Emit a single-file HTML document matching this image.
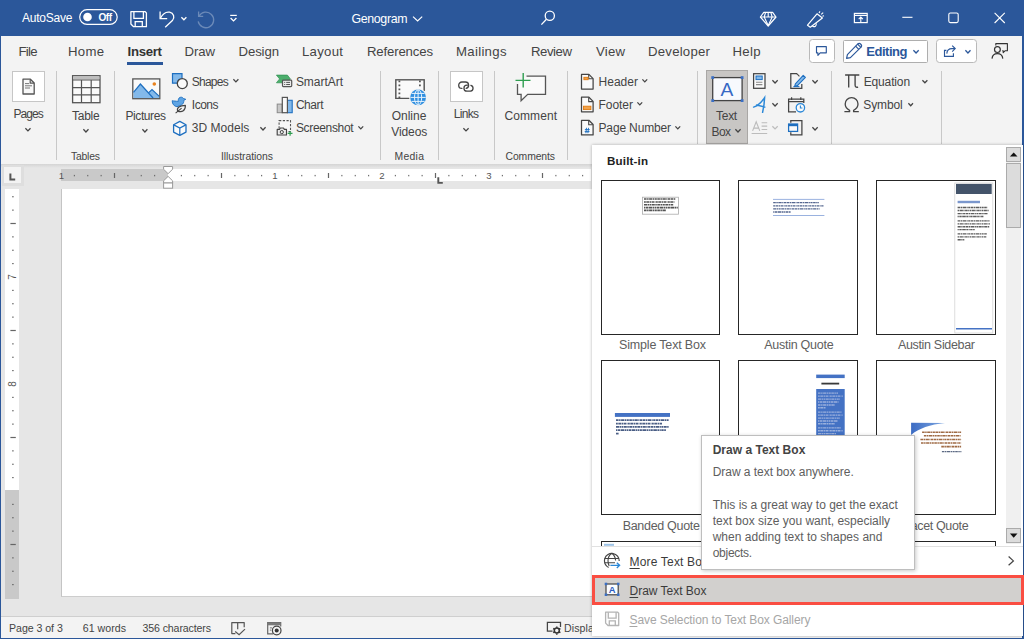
<!DOCTYPE html>
<html lang="en"><head><meta charset="utf-8"><title>Genogram - Word</title>
<style>
html,body{margin:0;padding:0}
body{width:1024px;height:639px;position:relative;overflow:hidden;background:#e6e6e6;font-family:"Liberation Sans",sans-serif}
.t{position:absolute;white-space:pre;line-height:1}
.i{position:absolute;overflow:visible}
.b{position:absolute;box-sizing:border-box}
u{text-decoration:underline;text-underline-offset:1.5px;text-decoration-thickness:1px}
#app{position:absolute;left:0;top:0;width:1024px;height:639px;overflow:hidden;background:#e6e6e6}
#title{position:absolute;left:0;top:0;width:1024px;height:35.5px;background:#2b579a}
#tabs{position:absolute;left:0;top:35.5px;width:1024px;height:31.5px;background:#f3f3f3}
#ribbon{position:absolute;left:0;top:67px;width:1024px;height:96.6px;background:#f3f3f3}
#rshadow{position:absolute;left:0;top:163.6px;width:1024px;height:4.4px;background:linear-gradient(#d4d4d4,#e6e6e6)}
#doc{position:absolute;left:0;top:163px;width:1024px;height:453px}
#status{position:absolute;left:0;top:616px;width:1024px;height:22px;background:#f3f3f3;border-top:1px solid #cfcfcf;box-sizing:border-box}
#bl{position:absolute;left:0;top:35px;width:1.4px;height:604px;background:#2b579a}
#br{position:absolute;left:1022px;top:35px;width:2px;height:604px;background:#2b579a}
#bb{position:absolute;left:0;top:637.5px;width:1024px;height:1.5px;background:#2b579a}
.sep{position:absolute;width:1px;background:#c8c8c8;top:71px;height:89px}
.tabsel{position:absolute;left:127px;top:62px;width:36px;height:3.4px;background:#2b579a}
.bigbtn{position:absolute;box-sizing:border-box;background:#fff;border:1px solid #c6c6c6}
#panel{position:absolute;left:592px;top:144.6px;width:431px;height:491.4px;background:#fff;box-shadow:0 0 3px rgba(0,0,0,.3)}
#tip{position:absolute;left:701.2px;top:435px;width:213.4px;height:135.2px;background:#fff;border:1px solid #bebebe;box-sizing:border-box;box-shadow:1px 1px 4px rgba(0,0,0,.22)}
.thumb{position:absolute;box-sizing:border-box;border:1.25px solid #262626;background:#fff;width:119.9px;height:154.6px;overflow:hidden}
</style></head>
<body>
<div id="app">
<div id="title"></div><div id="tabs"></div><div id="ribbon"></div>
<div id="rshadow"></div>
<div id="doc"><div style="position:absolute;left:0;top:-163px"><div class="b" style="left:2px;top:165px;width:21.6px;height:21px;background:#dedede"></div><div class="b" style="left:4px;top:167px;width:16.6px;height:16.4px;background:#f3f3f3"></div><svg class="i" style="left:8px;top:172px" width="9" height="10" viewBox="8 172 9 10"><path d="M10.4 173.6V179.4H15.2" fill="none" stroke="#555" stroke-width="2"/></svg><div class="b" style="left:61px;top:169px;width:107px;height:12.3px;background:#c9c9c9"></div><div class="b" style="left:168px;top:169px;width:423px;height:12.3px;background:#fff"></div><div class="b" style="left:61px;top:188.6px;width:531px;height:408.8px;background:#fff;border-left:1.5px solid #c4c4c4;border-bottom:1px solid #cdcdcd"></div><div class="b" style="left:5px;top:189px;width:13.6px;height:301px;background:#fff"></div><div class="b" style="left:5px;top:490px;width:13.6px;height:109px;background:#c9c9c9"></div><svg class="i" style="left:0px;top:163px" width="600" height="440" viewBox="0 163 600 440"><rect x="73.83" y="174.9" width="1.1" height="1.4" fill="#666"/><rect x="87.2" y="174.9" width="1.1" height="1.4" fill="#666"/><rect x="100.58" y="174.9" width="1.1" height="1.4" fill="#666"/><rect x="113.9" y="173" width="1.2" height="5" fill="#666"/><rect x="127.33" y="174.9" width="1.1" height="1.4" fill="#666"/><rect x="140.7" y="174.9" width="1.1" height="1.4" fill="#666"/><rect x="154.07" y="174.9" width="1.1" height="1.4" fill="#666"/><rect x="180.82" y="174.9" width="1.1" height="1.4" fill="#666"/><rect x="194.2" y="174.9" width="1.1" height="1.4" fill="#666"/><rect x="207.57" y="174.9" width="1.1" height="1.4" fill="#666"/><rect x="220.9" y="173" width="1.2" height="5" fill="#666"/><rect x="234.32" y="174.9" width="1.1" height="1.4" fill="#666"/><rect x="247.7" y="174.9" width="1.1" height="1.4" fill="#666"/><rect x="261.07" y="174.9" width="1.1" height="1.4" fill="#666"/><rect x="287.82" y="174.9" width="1.1" height="1.4" fill="#666"/><rect x="301.2" y="174.9" width="1.1" height="1.4" fill="#666"/><rect x="314.57" y="174.9" width="1.1" height="1.4" fill="#666"/><rect x="327.9" y="173" width="1.2" height="5" fill="#666"/><rect x="341.32" y="174.9" width="1.1" height="1.4" fill="#666"/><rect x="354.7" y="174.9" width="1.1" height="1.4" fill="#666"/><rect x="368.07" y="174.9" width="1.1" height="1.4" fill="#666"/><rect x="394.82" y="174.9" width="1.1" height="1.4" fill="#666"/><rect x="408.2" y="174.9" width="1.1" height="1.4" fill="#666"/><rect x="421.57" y="174.9" width="1.1" height="1.4" fill="#666"/><rect x="434.9" y="173" width="1.2" height="5" fill="#666"/><rect x="448.32" y="174.9" width="1.1" height="1.4" fill="#666"/><rect x="461.7" y="174.9" width="1.1" height="1.4" fill="#666"/><rect x="475.07" y="174.9" width="1.1" height="1.4" fill="#666"/><rect x="501.82" y="174.9" width="1.1" height="1.4" fill="#666"/><rect x="515.2" y="174.9" width="1.1" height="1.4" fill="#666"/><rect x="528.58" y="174.9" width="1.1" height="1.4" fill="#666"/><rect x="541.9" y="173" width="1.2" height="5" fill="#666"/><rect x="555.33" y="174.9" width="1.1" height="1.4" fill="#666"/><rect x="568.7" y="174.9" width="1.1" height="1.4" fill="#666"/><rect x="582.08" y="174.9" width="1.1" height="1.4" fill="#666"/><rect x="12.1" y="196.2" width="1.6" height="1.1" fill="#666"/><rect x="12.1" y="209.57" width="1.6" height="1.1" fill="#666"/><rect x="10.4" y="222.9" width="5.4" height="1.2" fill="#666"/><rect x="12.1" y="236.32" width="1.6" height="1.1" fill="#666"/><rect x="12.1" y="249.7" width="1.6" height="1.1" fill="#666"/><rect x="12.1" y="263.07" width="1.6" height="1.1" fill="#666"/><rect x="12.1" y="289.82" width="1.6" height="1.1" fill="#666"/><rect x="12.1" y="303.2" width="1.6" height="1.1" fill="#666"/><rect x="12.1" y="316.57" width="1.6" height="1.1" fill="#666"/><rect x="10.4" y="329.9" width="5.4" height="1.2" fill="#666"/><rect x="12.1" y="343.32" width="1.6" height="1.1" fill="#666"/><rect x="12.1" y="356.7" width="1.6" height="1.1" fill="#666"/><rect x="12.1" y="370.07" width="1.6" height="1.1" fill="#666"/><rect x="12.1" y="396.82" width="1.6" height="1.1" fill="#666"/><rect x="12.1" y="410.2" width="1.6" height="1.1" fill="#666"/><rect x="12.1" y="423.57" width="1.6" height="1.1" fill="#666"/><rect x="10.4" y="436.9" width="5.4" height="1.2" fill="#666"/><rect x="12.1" y="450.32" width="1.6" height="1.1" fill="#666"/><rect x="12.1" y="463.7" width="1.6" height="1.1" fill="#666"/><rect x="12.1" y="477.07" width="1.6" height="1.1" fill="#666"/><rect x="12.1" y="503.82" width="1.6" height="1.1" fill="#666"/><rect x="12.1" y="517.2" width="1.6" height="1.1" fill="#666"/><rect x="12.1" y="530.58" width="1.6" height="1.1" fill="#666"/><rect x="10.4" y="543.9" width="5.4" height="1.2" fill="#666"/><rect x="12.1" y="557.33" width="1.6" height="1.1" fill="#666"/><rect x="12.1" y="570.7" width="1.6" height="1.1" fill="#666"/><rect x="12.1" y="584.08" width="1.6" height="1.1" fill="#666"/><path d="M438.3 177.2V182.9H442.8" fill="none" stroke="#555" stroke-width="1.9"/><path d="M163.6 166.5H172.6V169.2L168.1 173.7L163.6 169.2Z" fill="#fff" stroke="#9a9a9a" stroke-width="1"/><path d="M163.6 183V180.8L168.1 176.4L172.6 180.8V183Z" fill="#fff" stroke="#9a9a9a" stroke-width="1"/><rect x="163.6" y="183" width="9" height="5.2" fill="#fff" stroke="#9a9a9a" stroke-width="1"/></svg><span class="t" style="left:55.5px;top:170.6px;width:12px;text-align:center;font-size:9.6px;color:#555">1</span><span class="t" style="left:269px;top:170.6px;width:12px;text-align:center;font-size:9.6px;color:#555">1</span><span class="t" style="left:376px;top:170.6px;width:12px;text-align:center;font-size:9.6px;color:#555">2</span><span class="t" style="left:483px;top:170.6px;width:12px;text-align:center;font-size:9.6px;color:#555">3</span><span class="t" style="left:7.3px;top:272px;width:12px;height:10px;text-align:center;font-size:10px;color:#555;transform:rotate(-90deg)">7</span><span class="t" style="left:7.3px;top:379px;width:12px;height:10px;text-align:center;font-size:10px;color:#555;transform:rotate(-90deg)">8</span></div></div>
<div id="status"></div>
<div id="chrome-title"><span class="t" style="left:22px;top:12px;font-size:12px;color:#fff;letter-spacing:-0.22px">AutoSave</span><span class="t" style="left:98.6px;top:13px;font-size:10px;color:#fff;letter-spacing:-0.53px;font-weight:700">Off</span><span class="t" style="left:351.4px;top:13px;font-size:12.4px;color:#fff;letter-spacing:-0.34px">Genogram</span><svg class="i" style="left:78px;top:8px" width="41" height="19" viewBox="78 8 41 19"><rect x="79.7" y="9.7" width="37.5" height="14.7" rx="7.35" fill="none" stroke="#fff" stroke-width="1.2"/><circle cx="87.5" cy="17" r="4.3" fill="#fff"/></svg><svg class="i" style="left:129px;top:10px" width="19" height="19" viewBox="129 10 19 19"><path d="M130.9 11.7H145.2L146.4 12.9V26.7H133.6L130.9 24Z" fill="none" stroke="#fff" stroke-width="1.3" stroke-linejoin="round"/><path d="M133.9 11.7V18.4H143.4V11.7" fill="none" stroke="#fff" stroke-width="1.3"/><path d="M135.2 26.7V21.6H142.3V26.7" fill="none" stroke="#fff" stroke-width="1.3"/></svg><svg class="i" style="left:158px;top:9px" width="18" height="20" viewBox="158 9 18 20"><path d="M160.1 11.4V18.6H167.2" fill="none" stroke="#fff" stroke-width="1.3"/><path d="M160.4 18.3C162.6 14 166.2 11.6 169.6 12.2C173.6 13 175.2 17.6 172.4 20.6L165.2 27.2" fill="none" stroke="#fff" stroke-width="1.3"/></svg><svg class="i" style="left:180.2px;top:15.6px" width="7.8" height="5.2" viewBox="180.2 15.6 7.8 5.2"><path d="M181.6 16.9 L184.1 19.4 L186.6 16.9" fill="none" stroke="#fff" stroke-width="1.3"/></svg><svg class="i" style="left:196px;top:9px;opacity:.3" width="20" height="20" viewBox="196 9 20 20"><path d="M198.6 11.6V16.4H203.2" fill="none" stroke="#fff" stroke-width="1.3"/><path d="M199 16.2A7.8 7.8 0 1 1 198.2 21.4" fill="none" stroke="#fff" stroke-width="1.3"/></svg><svg class="i" style="left:229px;top:14px" width="10" height="9" viewBox="229 14 10 9"><path d="M230.2 15.4H236.8" stroke="#fff" stroke-width="1.2"/><path d="M230.6 18L233.5 20.9L236.4 18" fill="none" stroke="#fff" stroke-width="1.3"/></svg><svg class="i" style="left:411px;top:15px" width="13" height="8" viewBox="411 15 13 8"><path d="M413 16.6L417.6 20.9L422.2 16.6" fill="none" stroke="#fff" stroke-width="1.2"/></svg><svg class="i" style="left:540px;top:10px" width="17" height="17" viewBox="540 10 17 17"><circle cx="549.8" cy="15.8" r="4.6" fill="none" stroke="#fff" stroke-width="1.3"/><path d="M546.4 19.2L541.4 24.6" stroke="#fff" stroke-width="1.3"/></svg><svg class="i" style="left:759px;top:10px" width="19" height="18" viewBox="759 10 19 18"><path d="M763.8 12.3H772.6L776 17L768.2 26L760.4 17Z" fill="none" stroke="#fff" stroke-width="1.2" stroke-linejoin="round"/><path d="M760.4 17H776M765.6 12.3L764.2 17L768.2 25.6L772.2 17L770.8 12.3M768.2 12.3V17" fill="none" stroke="#fff" stroke-width="1.1" stroke-linejoin="round"/></svg><svg class="i" style="left:806px;top:9px" width="19" height="20" viewBox="806 9 19 20"><path d="M817 13.8L822.4 17.9L810.3 27.2L807.5 25.2Z" fill="none" stroke="#fff" stroke-width="1.2" stroke-linejoin="round"/><path d="M812.4 25.8A1.9 1.9 0 0 0 815.8 23.2" fill="none" stroke="#fff" stroke-width="1.1"/><path d="M819 13L820 11.4M821.2 14.4L823.2 12.6M822.4 16.2L824 15.7" stroke="#fff" stroke-width="1.1"/></svg><svg class="i" style="left:853px;top:12px" width="16" height="12" viewBox="853 12 16 12"><rect x="854.4" y="13.4" width="12.8" height="9.2" fill="none" stroke="#fff" stroke-width="1.2"/><path d="M854.4 15.4H867.2" stroke="#fff" stroke-width="1.2"/><path d="M860.8 22V17.2M858.7 19.1L860.8 17L862.9 19.1" fill="none" stroke="#fff" stroke-width="1.1"/></svg><svg class="i" style="left:901px;top:11px" width="106" height="14" viewBox="901 11 106 14"><path d="M902.3 17.3H912.5" stroke="#fff" stroke-width="1.1"/><rect x="948.8" y="13" width="9.4" height="9.6" rx="1.6" fill="none" stroke="#fff" stroke-width="1.1"/><path d="M994.6 12.9L1004.8 23M1004.8 12.9L994.6 23" stroke="#fff" stroke-width="1.1"/></svg></div>
<div id="chrome-tabs"><div class="b" style="left:808.6px;top:39.2px;width:26px;height:23.6px;background:#fff;border:1.2px solid #b9b9b9;border-radius:3.5px"></div><div class="b" style="left:842.6px;top:39.6px;width:85.4px;height:23.2px;background:#fff;border:1.2px solid #aeaeae;border-radius:1.5px"></div><div class="b" style="left:935.8px;top:39.2px;width:41px;height:24px;background:#fff;border:1.2px solid #b9b9b9;border-radius:3.5px"></div><span class="t" style="left:18.5px;top:45px;font-size:13.2px;color:#444;letter-spacing:-0.75px">File</span><span class="t" style="left:68px;top:45px;font-size:13.2px;color:#444;letter-spacing:0.27px">Home</span><span class="t" style="left:127.5px;top:45px;font-size:13.2px;color:#333;letter-spacing:-0.28px;font-weight:700">Insert</span><span class="t" style="left:184.5px;top:45px;font-size:13.2px;color:#444;letter-spacing:-0.09px">Draw</span><span class="t" style="left:238.5px;top:45px;font-size:13.2px;color:#444;letter-spacing:-0.11px">Design</span><span class="t" style="left:302px;top:45px;font-size:13.2px;color:#444;letter-spacing:0.28px">Layout</span><span class="t" style="left:367px;top:45px;font-size:13.2px;color:#444;letter-spacing:-0.16px">References</span><span class="t" style="left:456px;top:45px;font-size:13.2px;color:#444;letter-spacing:0.3px">Mailings</span><span class="t" style="left:531px;top:45px;font-size:13.2px;color:#444;letter-spacing:-0.45px">Review</span><span class="t" style="left:596px;top:45px;font-size:13.2px;color:#444;letter-spacing:0.21px">View</span><span class="t" style="left:648px;top:45px;font-size:13.2px;color:#444;letter-spacing:0.23px">Developer</span><span class="t" style="left:732.5px;top:45px;font-size:13.2px;color:#444;letter-spacing:0.29px">Help</span><span class="t" style="left:866.2px;top:45px;font-size:13px;color:#2b579a;letter-spacing:-0.46px;font-weight:700">Editing</span><div class="tabsel"></div><svg class="i" style="left:815px;top:44.5px" width="13" height="12" viewBox="815 44.5 13 12"><path d="M816.5 46.1H826.3V52.3H820.2L817.9 54.8V52.3H816.5Z" fill="none" stroke="#2b579a" stroke-width="1.15" stroke-linejoin="round"/></svg><svg class="i" style="left:845px;top:42px" width="18" height="18" viewBox="845 42 18 18"><path d="M857.6 44.2L860.8 47.4L850.4 57.6L846.6 58.4L847.4 54.6Z" fill="none" stroke="#2b579a" stroke-width="1.2" stroke-linejoin="round"/><path d="M857.6 44.2A2.26 2.26 0 0 1 860.8 47.4M855.6 46.2L858.8 49.4" fill="none" stroke="#2b579a" stroke-width="1.2"/></svg><svg class="i" style="left:911.9px;top:49px" width="8.1" height="5.4" viewBox="911.9 49 8.1 5.4"><path d="M913.3 50.3 L915.95 53 L918.6 50.3" fill="none" stroke="#2b579a" stroke-width="1.3"/></svg><svg class="i" style="left:943px;top:44px" width="14" height="14" viewBox="943 44 14 14"><path d="M946.4 50.4H944.5V56.4H953.4V53.2" fill="none" stroke="#2b579a" stroke-width="1.15"/><path d="M946.8 53.6C947 50.4 949 48.6 952 48.6H954.6M952.2 45.6L955.2 48.6L952.2 51.6" fill="none" stroke="#2b579a" stroke-width="1.15"/></svg><svg class="i" style="left:964.4px;top:48.9px" width="7.9" height="5.4" viewBox="964.4 48.9 7.9 5.4"><path d="M965.8 50.2 L968.35 52.9 L970.9 50.2" fill="none" stroke="#2b579a" stroke-width="1.3"/></svg><svg class="i" style="left:990px;top:42px" width="19" height="18" viewBox="990 42 19 18"><circle cx="997.4" cy="49.6" r="2.9" fill="none" stroke="#333" stroke-width="1.2"/><path d="M992 58.6C992.4 55 994.6 53.6 997.4 53.6C1000.2 53.6 1002.4 55 1002.8 58.6" fill="none" stroke="#333" stroke-width="1.2"/><path d="M995.8 45.4V43.6H1007.4V50.8H1005L1003.2 52.6V50.8H1002.2" fill="none" stroke="#333" stroke-width="1.1" stroke-linejoin="round"/></svg></div>
<div id="chrome-ribbon"><div class="sep" style="left:56.2px;height:89px"></div><div class="sep" style="left:114.2px;height:89px"></div><div class="sep" style="left:379.7px;height:89px"></div><div class="sep" style="left:438px;height:89px"></div><div class="sep" style="left:493.7px;height:89px"></div><div class="sep" style="left:566.7px;height:89px"></div><div class="sep" style="left:697.2px;height:73px"></div><div class="sep" style="left:831.2px;height:73px"></div><div class="sep" style="left:941.2px;height:73px"></div><div class="bigbtn" style="left:12px;top:71px;width:33px;height:30.7px"></div><div class="bigbtn" style="left:450px;top:71px;width:33px;height:30.7px"></div><div class="b" style="left:706px;top:70px;width:42px;height:74px;background:#c8c6c4;border:1px solid #a9a7a5"></div><span class="t" style="left:13.5px;top:108px;font-size:12px;color:#444;letter-spacing:-0.93px">Pages</span><span class="t" style="left:72px;top:110px;font-size:12px;color:#444;letter-spacing:-0.27px">Table</span><span class="t" style="left:125.5px;top:110px;font-size:12px;color:#444;letter-spacing:-0.42px">Pictures</span><span class="t" style="left:191.8px;top:76px;font-size:12px;color:#444;letter-spacing:-0.76px">Shapes</span><span class="t" style="left:191.8px;top:99px;font-size:12px;color:#444;letter-spacing:-0.5px">Icons</span><span class="t" style="left:191.8px;top:122px;font-size:12px;color:#444;letter-spacing:0.02px">3D Models</span><span class="t" style="left:295.9px;top:76px;font-size:12px;color:#444;letter-spacing:-0.03px">SmartArt</span><span class="t" style="left:295.9px;top:99px;font-size:12px;color:#444;letter-spacing:-0.44px">Chart</span><span class="t" style="left:295.9px;top:122px;font-size:12px;color:#444;letter-spacing:-0.33px">Screenshot</span><span class="t" style="left:391.7px;top:110px;font-size:12px;color:#444;letter-spacing:0px">Online</span><span class="t" style="left:391.3px;top:126px;font-size:12px;color:#444;letter-spacing:-0.1px">Videos</span><span class="t" style="left:453.8px;top:108px;font-size:12px;color:#444;letter-spacing:-0.68px">Links</span><span class="t" style="left:504.5px;top:110px;font-size:12px;color:#444;letter-spacing:0.08px">Comment</span><span class="t" style="left:598.5px;top:76px;font-size:12px;color:#444;letter-spacing:0.03px">Header</span><span class="t" style="left:598.5px;top:99px;font-size:12px;color:#444;letter-spacing:-0.04px">Footer</span><span class="t" style="left:598.5px;top:122px;font-size:12px;color:#444;letter-spacing:-0.15px">Page Number</span><span class="t" style="left:716.1px;top:110px;font-size:12px;color:#444;letter-spacing:-0.31px">Text</span><span class="t" style="left:711.5px;top:126px;font-size:12px;color:#444;letter-spacing:-0.59px">Box</span><span class="t" style="left:863.7px;top:76px;font-size:12px;color:#444;letter-spacing:-0.14px">Equation</span><span class="t" style="left:863.3px;top:99px;font-size:12px;color:#444;letter-spacing:-0.14px">Symbol</span><span class="t" style="left:71px;top:152px;font-size:10.4px;color:#444;letter-spacing:-0.21px">Tables</span><span class="t" style="left:221px;top:152px;font-size:10.4px;color:#444;letter-spacing:-0.05px">Illustrations</span><span class="t" style="left:394.5px;top:152px;font-size:10.4px;color:#444;letter-spacing:0.3px">Media</span><span class="t" style="left:505.5px;top:152px;font-size:10.4px;color:#444;letter-spacing:-0.1px">Comments</span><svg class="i" style="left:21px;top:77px" width="15" height="19" viewBox="21 77 15 19"><path d="M23 79.2H30.4L34.2 83V94H23Z" fill="#f8f8f8" stroke="#555" stroke-width="1.3" stroke-linejoin="round"/><path d="M30.2 79.4V83.2H34" fill="none" stroke="#555" stroke-width="1.2"/><path d="M25 83.6H29M25 85.8H32M25 88H30" stroke="#777" stroke-width="1"/></svg><svg class="i" style="left:24px;top:126.6px" width="7.9" height="5.3" viewBox="24 126.6 7.9 5.3"><path d="M25.4 127.9 L27.95 130.5 L30.5 127.9" fill="none" stroke="#444" stroke-width="1.25"/></svg><svg class="i" style="left:70.5px;top:74px" width="31" height="31" viewBox="70.5 74 31 31"><rect x="72.1" y="75.7" width="27.4" height="27" fill="#fafafa" stroke="#555" stroke-width="1.3"/><rect x="72.8" y="76.3" width="26" height="3.2" fill="#bdbdbd"/><path d="M72.1 80H99.5M72.1 87.6H99.5M72.1 94.9H99.5M81 80V102.7M90.7 80V102.7" stroke="#555" stroke-width="1.2" fill="none"/></svg><svg class="i" style="left:81.5px;top:128.1px" width="7.9" height="5.4" viewBox="81.5 128.1 7.9 5.4"><path d="M82.9 129.4 L85.45 132.1 L88 129.4" fill="none" stroke="#444" stroke-width="1.25"/></svg><svg class="i" style="left:130.5px;top:77px" width="31" height="24" viewBox="130.5 77 31 24"><rect x="132.3" y="78.9" width="27" height="19.8" fill="#fafafa" stroke="#555" stroke-width="1.3"/><path d="M133 92.4L139.9 84L152.6 98H133Z" fill="#83b9ea"/><path d="M148 92.6L151.5 89.4L158.6 96.2V98H152.6Z" fill="#83b9ea"/><path d="M133 92.4L139.9 84L152.6 98M148 92.9L151.5 89.6L158.8 96.4" fill="none" stroke="#1e6fc0" stroke-width="1.2"/><circle cx="153.8" cy="84" r="1.8" fill="#e8821e"/></svg><svg class="i" style="left:141.3px;top:128.2px" width="7.8" height="5.4" viewBox="141.3 128.2 7.8 5.4"><path d="M142.7 129.5 L145.2 132.2 L147.7 129.5" fill="none" stroke="#444" stroke-width="1.25"/></svg><svg class="i" style="left:171px;top:72px" width="18" height="19" viewBox="171 72 18 19"><path d="M172.5 73.7H182V78.6A5.2 5.2 0 0 0 177.4 83.2H172.5Z" fill="#83b9ea" stroke="#1e6fc0" stroke-width="1.2"/><circle cx="182.3" cy="83.6" r="5" fill="#fafafa" stroke="#444" stroke-width="1.3"/></svg><svg class="i" style="left:232.1px;top:78.1px" width="7.8" height="5.3" viewBox="232.1 78.1 7.8 5.3"><path d="M233.5 79.4 L236 82 L238.5 79.4" fill="none" stroke="#444" stroke-width="1.25"/></svg><svg class="i" style="left:171px;top:95.5px" width="16" height="18.5" viewBox="171 95.5 16 18.5"><path d="M172.2 100.2C172.2 103.6 174 105.8 177 106.2L181.4 104.6C183.4 103.4 184 101.4 183.8 99.8L185.8 98.8L183.4 98C182.6 96.4 180.2 96.2 179 97.6C178.2 98.6 178.2 100 178.4 100.8C176 100.8 173.6 100.4 172.2 100.2Z" fill="#5ea4e4" stroke="#1e6fc0" stroke-width=".9" stroke-linejoin="round"/><path d="M177.6 110.6C176.6 107.4 179.4 104.8 185.4 104.8C185.6 110 182.2 112.2 177.6 110.6ZM175.6 112.6L181.6 107.6" fill="#f3f3f3" stroke="#444" stroke-width="1.15" stroke-linejoin="round"/></svg><svg class="i" style="left:171.5px;top:119.5px" width="16" height="17" viewBox="171.5 119.5 16 17"><path d="M179.3 120.9L185.5 124.2V131.6L179.3 134.9L173.1 131.6V124.2Z" fill="#fafafa" stroke="#1e6fc0" stroke-width="1.3" stroke-linejoin="round"/><path d="M173.3 124.4L179.3 127.6L185.3 124.4M179.3 127.6V134.6" fill="none" stroke="#1e6fc0" stroke-width="1.2"/></svg><svg class="i" style="left:259.4px;top:125.8px" width="8" height="5.4" viewBox="259.4 125.8 8 5.4"><path d="M260.8 127.1 L263.4 129.8 L266 127.1" fill="none" stroke="#444" stroke-width="1.25"/></svg><svg class="i" style="left:275px;top:74px" width="18.5" height="14" viewBox="275 74 18.5 14"><path d="M276.4 75.1H287.4L290.4 78.9L287.4 82.8H276.4L279.6 78.9Z" fill="#4cae6c" stroke="#2f9150" stroke-width=".7" stroke-linejoin="round"/><rect x="282.5" y="80.2" width="9.2" height="6.4" rx=".8" fill="#ececec" stroke="#555" stroke-width="1.2"/><path d="M284.2 82.4H285.2M286.2 82.4H290M284.2 84.5H285.2M286.2 84.5H290" stroke="#555" stroke-width="1"/></svg><svg class="i" style="left:275.5px;top:95.5px" width="18" height="18" viewBox="275.5 95.5 18 18"><rect x="276.7" y="103.6" width="5" height="8.6" fill="#c8c8c8" stroke="#8a8a8a" stroke-width="1"/><rect x="286.9" y="99.8" width="4.8" height="12.4" fill="#83b9ea" stroke="#1e6fc0" stroke-width="1.1"/><rect x="281.8" y="96.9" width="5.1" height="15.3" fill="#fafafa" stroke="#555" stroke-width="1.2"/></svg><svg class="i" style="left:275.5px;top:119px" width="18" height="18" viewBox="275.5 119 18 18"><rect x="278.6" y="120.6" width="11.4" height="11" fill="#f8f8f8" stroke="#555" stroke-width="1.1" stroke-dasharray="2.2 1.5"/><path d="M276.7 129.4H279L279.8 128H283L283.8 129.4H286V135H276.7Z" fill="#ececec" stroke="#444" stroke-width="1.15" stroke-linejoin="round"/><circle cx="281.3" cy="132.1" r="1.6" fill="none" stroke="#444" stroke-width="1"/><path d="M287.2 133.4H292M289.6 131V135.8" stroke="#2f9e50" stroke-width="1.2"/></svg><svg class="i" style="left:357px;top:125px" width="7.6" height="5.3" viewBox="357 125 7.6 5.3"><path d="M358.4 126.3 L360.8 128.9 L363.2 126.3" fill="none" stroke="#444" stroke-width="1.25"/></svg><svg class="i" style="left:394px;top:78px" width="33" height="29" viewBox="394 78 33 29"><path d="M424.1 91V79.8H395.9V98.4H410.5" fill="#fafafa" stroke="#555" stroke-width="1.3"/><path d="M395.9 79.8H424.1V98.4H395.9Z" fill="#fafafa"/><path d="M424.1 91V79.8H395.9V98.4H410.5" fill="none" stroke="#555" stroke-width="1.3"/><path d="M399.4 80.4V98" stroke="#555" stroke-width="1.8" stroke-dasharray="1.8 2.25"/><path d="M419.9 80.4V88" stroke="#555" stroke-width="1.8" stroke-dasharray="1.8 2.25"/><circle cx="418.1" cy="97.4" r="9" fill="#f3f3f3"/><circle cx="418.1" cy="97.4" r="7.9" fill="#2f8fe0"/><path d="M410.4 97.4H425.8M418.1 89.7V105.1M411.6 93.4H424.6M411.6 101.4H424.6" stroke="#e8f3fc" stroke-width="1"/><ellipse cx="418.1" cy="97.4" rx="3.6" ry="7.6" fill="none" stroke="#e8f3fc" stroke-width="1"/></svg><svg class="i" style="left:457px;top:80px" width="19" height="13" viewBox="457 80 19 13"><path d="M470.9 85.3A3.05 3.05 0 0 1 470.6 91.2H467A3.05 3.05 0 0 1 467 85.1H467.6" fill="none" stroke="#444" stroke-width="1.3" stroke-linecap="round"/><path d="M461.9 88.4A3.2 3.2 0 0 1 461.9 82H465.3A3.2 3.2 0 0 1 466.2 88.3" fill="none" stroke="#444" stroke-width="1.3" stroke-linecap="round"/></svg><svg class="i" style="left:461.8px;top:126.6px" width="8" height="5.3" viewBox="461.8 126.6 8 5.3"><path d="M463.2 127.9 L465.8 130.5 L468.4 127.9" fill="none" stroke="#444" stroke-width="1.25"/></svg><svg class="i" style="left:513.5px;top:72px" width="33" height="31" viewBox="513.5 72 33 31"><path d="M526 76.2H545V94.4H527.2L520.6 100.8V94.4H517V84" fill="#fafafa" stroke="#555" stroke-width="1.3" stroke-linejoin="miter"/><path d="M515 80.4H530M522.7 73V87.6" stroke="#2f9e50" stroke-width="1.4"/></svg><svg class="i" style="left:579.5px;top:72.5px" width="15" height="17.5" viewBox="579.5 72.5 15 17.5"><path d="M581 73.9H588.4L592.6 78.10000000000001V88.5H581Z" fill="#fafafa" stroke="#444" stroke-width="1.25" stroke-linejoin="round"/><path d="M588.2 74.10000000000001V78.3H592.4" fill="none" stroke="#444" stroke-width="1.1"/><rect x="583.4" y="76.8" width="4.2" height="2.4" fill="#f0a24a" stroke="#e07a10" stroke-width=".9"/></svg><svg class="i" style="left:579.5px;top:96px" width="15" height="17.5" viewBox="579.5 96 15 17.5"><path d="M581 97.2H588.4L592.6 101.4V111.8H581Z" fill="#fafafa" stroke="#444" stroke-width="1.25" stroke-linejoin="round"/><path d="M588.2 97.4V101.6H592.4" fill="none" stroke="#444" stroke-width="1.1"/><rect x="583" y="106.2" width="7.4" height="3.4" fill="#f0a24a" stroke="#e07a10" stroke-width=".9"/></svg><svg class="i" style="left:579.5px;top:119px" width="15" height="17.5" viewBox="579.5 119 15 17.5"><path d="M581 120.3H588.4L592.6 124.5V134.9H581Z" fill="#fafafa" stroke="#444" stroke-width="1.25" stroke-linejoin="round"/><path d="M588.2 120.5V124.69999999999999H592.4" fill="none" stroke="#444" stroke-width="1.1"/><path d="M584.4 129.6H589.2M584.2 131.6H589M586 127.8L585.4 133.2M588 127.8L587.4 133.2" stroke="#1e6fc0" stroke-width=".95"/></svg><svg class="i" style="left:641px;top:78.1px" width="7.6" height="5.3" viewBox="641 78.1 7.6 5.3"><path d="M642.4 79.4 L644.8 82 L647.2 79.4" fill="none" stroke="#444" stroke-width="1.25"/></svg><svg class="i" style="left:636px;top:101.4px" width="7.6" height="5.3" viewBox="636 101.4 7.6 5.3"><path d="M637.4 102.7 L639.8 105.3 L642.2 102.7" fill="none" stroke="#444" stroke-width="1.25"/></svg><svg class="i" style="left:674px;top:124.8px" width="7.6" height="5.3" viewBox="674 124.8 7.6 5.3"><path d="M675.4 126.1 L677.8 128.7 L680.2 126.1" fill="none" stroke="#444" stroke-width="1.25"/></svg><svg class="i" style="left:709.5px;top:75px" width="35" height="28.5" viewBox="709.5 75 35 28.5"><rect x="712.2" y="77.6" width="29.4" height="23" fill="#f7f9fd" stroke="#444" stroke-width="1.3"/><g fill="#3b6fc4"><rect x="710.8" y="76.2" width="2.8" height="2.8"/><rect x="740.2" y="76.2" width="2.8" height="2.8"/><rect x="710.8" y="99.2" width="2.8" height="2.8"/><rect x="740.2" y="99.2" width="2.8" height="2.8"/></g><text x="726.5" y="95.6" text-anchor="middle" font-family="Liberation Sans, sans-serif" font-size="19.2" fill="#3668c4">A</text></svg><svg class="i" style="left:733.7px;top:127.7px" width="8" height="5.4" viewBox="733.7 127.7 8 5.4"><path d="M735.1 129 L737.7 131.7 L740.3 129" fill="none" stroke="#444" stroke-width="1.25"/></svg><svg class="i" style="left:752px;top:72px" width="15" height="18" viewBox="752 72 15 18"><rect x="753.6" y="73.7" width="11.4" height="14.6" fill="#fafafa" stroke="#444" stroke-width="1.25"/><rect x="756" y="76" width="6.2" height="3.6" fill="#83b9ea" stroke="#1e6fc0" stroke-width="1"/><path d="M756 82.2H762.4M756 84.6H762.4" stroke="#8a8a8a" stroke-width="1.1"/></svg><svg class="i" style="left:771px;top:78.5px" width="8.1" height="5.4" viewBox="771 78.5 8.1 5.4"><path d="M772.4 79.8 L775.05 82.5 L777.7 79.8" fill="none" stroke="#444" stroke-width="1.25"/></svg><svg class="i" style="left:752px;top:95.5px" width="16" height="18" viewBox="752 95.5 16 18"><path d="M753.6 106.6C757.6 105.4 761.6 101.6 764.6 97.2C764.4 102.4 763.6 107.6 762.6 111.8M756.6 104.4C759.4 105 762 105.6 764.8 106.6" fill="none" stroke="#2b88d8" stroke-width="1.5" stroke-linecap="round"/></svg><svg class="i" style="left:771px;top:102px" width="8.1" height="5.4" viewBox="771 102 8.1 5.4"><path d="M772.4 103.3 L775.05 106 L777.7 103.3" fill="none" stroke="#444" stroke-width="1.25"/></svg><svg class="i" style="left:751px;top:119.5px" width="18" height="15" viewBox="751 119.5 18 15"><path d="M752.6 130.4L756.2 121.2L759.8 130.4M753.8 127.6H758.6" fill="none" stroke="#bcbcbc" stroke-width="1.1"/><path d="M761.6 122.2H767.2M761.6 125.6H767.2M761.6 129H767.2M751.6 133H767.2" stroke="#bcbcbc" stroke-width="1.1"/></svg><svg class="i" style="left:771px;top:125.4px" width="8.1" height="5.3" viewBox="771 125.4 8.1 5.3"><path d="M772.4 126.7 L775.05 129.3 L777.7 126.7" fill="none" stroke="#bcbcbc" stroke-width="1.25"/></svg><svg class="i" style="left:789px;top:72px" width="17" height="18" viewBox="789 72 17 18"><path d="M797 73.7H790.8V88.3H801.8V84" fill="none" stroke="#444" stroke-width="1.25"/><path d="M796.8 73.7L799.4 76.4" fill="none" stroke="#444" stroke-width="1.1"/><path d="M803.2 75.4L805.4 77.4L797.4 85.6L794.6 86.4L795.4 83.8Z" fill="#83b9ea" stroke="#1e6fc0" stroke-width="1.1" stroke-linejoin="round"/><path d="M793.4 86.6H799.4" stroke="#1e6fc0" stroke-width="1.1"/></svg><svg class="i" style="left:810.6px;top:78.5px" width="8.1" height="5.4" viewBox="810.6 78.5 8.1 5.4"><path d="M812 79.8 L814.65 82.5 L817.3 79.8" fill="none" stroke="#444" stroke-width="1.25"/></svg><svg class="i" style="left:787px;top:96px" width="19" height="18" viewBox="787 96 19 18"><path d="M796 111.8H788.6V99H803.8V103" fill="none" stroke="#444" stroke-width="1.25"/><path d="M788.6 101.6H803.8M791.6 97.2V100M800.8 97.2V100" stroke="#444" stroke-width="1.2"/><circle cx="800.4" cy="107.8" r="4.2" fill="#fafafa" stroke="#2b88d8" stroke-width="1.3"/><path d="M800.4 105.4V108H802.4" fill="none" stroke="#2b88d8" stroke-width="1.1"/></svg><svg class="i" style="left:787px;top:119px" width="17" height="18" viewBox="787 119 17 18"><path d="M790.8 122.8V120.7H801.9V134.9H790.8V132.2" fill="none" stroke="#444" stroke-width="1.25"/><rect x="788.6" y="124" width="9" height="7.4" fill="#fafafa" stroke="#1e6fc0" stroke-width="1.25"/><rect x="788.6" y="124" width="9" height="2.2" fill="#1e6fc0"/></svg><svg class="i" style="left:810.6px;top:125.6px" width="8.1" height="5.4" viewBox="810.6 125.6 8.1 5.4"><path d="M812 126.9 L814.65 129.6 L817.3 126.9" fill="none" stroke="#444" stroke-width="1.25"/></svg><svg class="i" style="left:843.5px;top:72.5px" width="17" height="16" viewBox="843.5 72.5 17 16"><path d="M844.6 74.5H858.8M848.2 74.5V87M854.6 74.5V84.4C854.6 86.4 855.6 87.2 857.6 86.6" fill="none" stroke="#444" stroke-width="1.35"/></svg><svg class="i" style="left:920.7px;top:79px" width="7.8" height="5.2" viewBox="920.7 79 7.8 5.2"><path d="M922.1 80.3 L924.6 82.8 L927.1 80.3" fill="none" stroke="#444" stroke-width="1.25"/></svg><svg class="i" style="left:843px;top:95.5px" width="17" height="17.5" viewBox="843 95.5 17 17.5"><path d="M844.4 111.2H849.6V109.8C846.6 108.4 845.2 106.2 845.2 103.6C845.2 99.8 848 97.2 851.6 97.2C855.2 97.2 858 99.8 858 103.6C858 106.2 856.6 108.4 853.6 109.8V111.2H858.8" fill="none" stroke="#444" stroke-width="1.3" stroke-linejoin="round"/></svg><svg class="i" style="left:906.6px;top:101.5px" width="7.4" height="5.2" viewBox="906.6 101.5 7.4 5.2"><path d="M908 102.8 L910.3 105.3 L912.6 102.8" fill="none" stroke="#444" stroke-width="1.25"/></svg></div>
<div id="chrome-status"><span class="t" style="left:9px;top:623px;font-size:10.6px;color:#444;letter-spacing:-0.04px">Page 3 of 3</span><span class="t" style="left:82.8px;top:623px;font-size:10.6px;color:#444;letter-spacing:0.03px">61 words</span><span class="t" style="left:142.6px;top:623px;font-size:10.6px;color:#444;letter-spacing:-0.13px">356 characters</span><span class="t" style="left:564px;top:623px;font-size:10.6px;color:#444;letter-spacing:0.07px">Display Settings</span><svg class="i" style="left:230px;top:620.5px" width="16" height="15.5" viewBox="230 620.5 16 15.5"><path d="M235.4 633.1H231.8V622.1H237.7V628.8M237.7 622.1H244.2V626.8" fill="none" stroke="#555" stroke-width="1.2" stroke-linejoin="round"/><path d="M235.2 631L239.1 634.3L245 628.6" fill="none" stroke="#555" stroke-width="1.2"/></svg><svg class="i" style="left:265.5px;top:620.5px" width="17" height="15" viewBox="265.5 620.5 17 15"><path d="M272.6 633.4H267.2V622H280.2V626" fill="none" stroke="#666" stroke-width="1.2"/><rect x="267.2" y="622" width="13" height="2.8" fill="#7a7a7a"/><path d="M269.4 627.4H271.6M269.4 629.6H270.8" stroke="#777" stroke-width="1"/><circle cx="276.2" cy="630" r="4.3" fill="#f3f3f3" stroke="#444" stroke-width="1.2"/><circle cx="276.2" cy="630" r="2" fill="#333"/></svg><svg class="i" style="left:545.5px;top:620.5px" width="16.5" height="15" viewBox="545.5 620.5 16.5 15"><path d="M552 630.6H546.9V621.9H560V626.4" fill="none" stroke="#444" stroke-width="1.25"/><circle cx="556.3" cy="630.1" r="2.5" fill="none" stroke="#333" stroke-width="1.5"/><path d="M556.3 625.9V627.3M556.3 632.9V634.3M552.7 628L553.9 628.7M558.7 631.5L559.9 632.2M552.7 632.2L553.9 631.5M558.7 628.7L559.9 628" stroke="#333" stroke-width="1.5"/></svg></div>
<div id="bl"></div><div id="br"></div><div id="bb"></div>
<div id="panel"><div style="position:absolute;left:-592px;top:-144.6px"><div class="b" style="left:1006px;top:146.6px;width:15.4px;height:397px;background:#f0f0f0"></div><div class="b" style="left:1006px;top:147px;width:15.2px;height:15.4px;background:#dcdcdc;border:1px solid #ababab"></div><div class="b" style="left:1006px;top:162.6px;width:15.2px;height:65px;background:#dcdcdc;border:1px solid #ababab"></div><div class="b" style="left:1006px;top:528.4px;width:15.2px;height:14.8px;background:#dcdcdc;border:1px solid #ababab"></div><svg class="i" style="left:1006px;top:147px" width="16" height="16" viewBox="1006 147 16 16"><path d="M1009.9 156.6L1013.7 152.4L1017.5 156.6Z" fill="#111"/></svg><svg class="i" style="left:1006px;top:528px" width="16" height="16" viewBox="1006 528 16 16"><path d="M1009.9 533.6L1013.7 537.8L1017.5 533.6Z" fill="#111"/></svg><div class="thumb" style="left:600.6px;top:180.1px"></div><div class="thumb" style="left:738.2px;top:180.1px"></div><div class="thumb" style="left:875.8px;top:180.1px"></div><div class="thumb" style="left:600.6px;top:360.1px"></div><div class="thumb" style="left:738.2px;top:360.1px"></div><div class="thumb" style="left:875.8px;top:360.1px"></div><div class="thumb" style="left:600.6px;top:540.6px;height:5.4px;border-bottom:0"></div><div class="thumb" style="left:738.2px;top:540.6px;height:5.4px;border-bottom:0"></div><div class="thumb" style="left:875.8px;top:540.6px;height:5.4px;border-bottom:0"></div><svg class="i" style="left:592px;top:144px" width="432" height="410" viewBox="592 144 432 410"><rect x="642.6" y="197.2" width="36" height="17" fill="#fff" stroke="#ababab" stroke-width=".8"/><path d="M644 199.00H675.80" stroke="#2e2e2e" stroke-width="1.6" stroke-dasharray="2.6 .5 1.5 .5 3.4 .5 1.1 .5 2.2 .5" opacity=".82"/><path d="M644 202.00H674.40" stroke="#2e2e2e" stroke-width="1.6" stroke-dasharray="1.8 .5 3 .5 1.2 .5 2.6 .5 .9 .5" opacity=".82"/><path d="M644 204.80H673.20" stroke="#2e2e2e" stroke-width="1.6" stroke-dasharray="3.2 .5 1.3 .5 2 .5 2.8 .5 1.5 .5" opacity=".82"/><path d="M644 207.60H677.80" stroke="#2e2e2e" stroke-width="1.6" stroke-dasharray="1.2 .5 2.4 .5 3.6 .5 1.7 .5" opacity=".82"/><path d="M644 210.40H665.90" stroke="#2e2e2e" stroke-width="1.6" stroke-dasharray="2.6 .5 1.5 .5 3.4 .5 1.1 .5 2.2 .5" opacity=".82"/><rect x="773" y="198.9" width="51.4" height=".9" fill="#8faadc"/><rect x="773" y="215.1" width="51.4" height=".9" fill="#8faadc"/><path d="M773.2 202.70H819.00" stroke="#2f4577" stroke-width="1.3" stroke-dasharray="2.6 .5 1.5 .5 3.4 .5 1.1 .5 2.2 .5" opacity=".82"/><path d="M773.2 205.80H824.00" stroke="#2f4577" stroke-width="1.3" stroke-dasharray="1.8 .5 3 .5 1.2 .5 2.6 .5 .9 .5" opacity=".82"/><path d="M773.2 208.90H819.60" stroke="#2f4577" stroke-width="1.3" stroke-dasharray="3.2 .5 1.3 .5 2 .5 2.8 .5 1.5 .5" opacity=".82"/><path d="M773.2 212.00H790.60" stroke="#2f4577" stroke-width="1.3" stroke-dasharray="1.2 .5 2.4 .5 3.6 .5 1.7 .5" opacity=".82"/><rect x="954.8" y="183" width="38" height="150" fill="#fff" stroke="#d4d4d4" stroke-width=".8"/><rect x="956" y="183.9" width="35.7" height="10.1" fill="#44546a"/><rect x="957.6" y="200.8" width="22.4" height="2.4" fill="#6d8cc8" opacity=".9"/><path d="M957.6 207.50H987.50" stroke="#3a3a3a" stroke-width="1.35" stroke-dasharray="2.6 .5 1.5 .5 3.4 .5 1.1 .5 2.2 .5" opacity=".82"/><path d="M957.6 210.50H988.60" stroke="#3a3a3a" stroke-width="1.35" stroke-dasharray="1.8 .5 3 .5 1.2 .5 2.6 .5 .9 .5" opacity=".82"/><path d="M957.6 213.60H988.00" stroke="#3a3a3a" stroke-width="1.35" stroke-dasharray="3.2 .5 1.3 .5 2 .5 2.8 .5 1.5 .5" opacity=".82"/><path d="M957.6 216.50H983.40" stroke="#3a3a3a" stroke-width="1.35" stroke-dasharray="1.2 .5 2.4 .5 3.6 .5 1.7 .5" opacity=".82"/><path d="M957.6 220.90H989.80" stroke="#3a3a3a" stroke-width="1.35" stroke-dasharray="2.6 .5 1.5 .5 3.4 .5 1.1 .5 2.2 .5" opacity=".82"/><path d="M957.6 223.80H990.00" stroke="#3a3a3a" stroke-width="1.35" stroke-dasharray="1.8 .5 3 .5 1.2 .5 2.6 .5 .9 .5" opacity=".82"/><path d="M957.6 226.70H989.20" stroke="#3a3a3a" stroke-width="1.35" stroke-dasharray="3.2 .5 1.3 .5 2 .5 2.8 .5 1.5 .5" opacity=".82"/><path d="M957.6 229.60H974.70" stroke="#3a3a3a" stroke-width="1.35" stroke-dasharray="1.2 .5 2.4 .5 3.6 .5 1.7 .5" opacity=".82"/><path d="M957.6 233.90H986.90" stroke="#3a3a3a" stroke-width="1.35" stroke-dasharray="2.6 .5 1.5 .5 3.4 .5 1.1 .5 2.2 .5" opacity=".82"/><path d="M957.6 236.80H986.30" stroke="#3a3a3a" stroke-width="1.35" stroke-dasharray="1.8 .5 3 .5 1.2 .5 2.6 .5 .9 .5" opacity=".82"/><path d="M957.6 239.70H964.30" stroke="#3a3a3a" stroke-width="1.35" stroke-dasharray="3.2 .5 1.3 .5 2 .5 2.8 .5 1.5 .5" opacity=".82"/><rect x="956" y="328" width="36" height="1.5" fill="#4472c4"/><rect x="614.9" y="413" width="55.1" height="3.9" fill="#4472c4"/><path d="M616 420.20H668.60" stroke="#223a6a" stroke-width="1.7" stroke-dasharray="2.6 .5 1.5 .5 3.4 .5 1.1 .5 2.2 .5" opacity=".82"/><path d="M616 423.60H662.00" stroke="#223a6a" stroke-width="1.7" stroke-dasharray="1.8 .5 3 .5 1.2 .5 2.6 .5 .9 .5" opacity=".82"/><path d="M616 426.80H668.60" stroke="#223a6a" stroke-width="1.7" stroke-dasharray="3.2 .5 1.3 .5 2 .5 2.8 .5 1.5 .5" opacity=".82"/><path d="M616 430.10H665.90" stroke="#223a6a" stroke-width="1.7" stroke-dasharray="1.2 .5 2.4 .5 3.6 .5 1.7 .5" opacity=".82"/><path d="M616 433.60H618.90" stroke="#223a6a" stroke-width="1.7" stroke-dasharray="2.6 .5 1.5 .5 3.4 .5 1.1 .5 2.2 .5" opacity=".82"/><rect x="816.2" y="374.6" width="28.5" height="3.5" fill="#4472c4"/><rect x="821.4" y="382.7" width="17.8" height="1.8" fill="#3a3a3a"/><rect x="816.2" y="389" width="28.5" height="112" fill="#4472c4"/><path d="M818 393.10H838.00" stroke="#aebfe3" stroke-width="1.4" stroke-dasharray="2.6 .5 1.5 .5 3.4 .5 1.1 .5 2.2 .5" opacity=".82"/><path d="M818 396.10H842.80" stroke="#aebfe3" stroke-width="1.4" stroke-dasharray="1.8 .5 3 .5 1.2 .5 2.6 .5 .9 .5" opacity=".82"/><path d="M818 399.10H840.00" stroke="#aebfe3" stroke-width="1.4" stroke-dasharray="3.2 .5 1.3 .5 2 .5 2.8 .5 1.5 .5" opacity=".82"/><path d="M818 402.00H838.50" stroke="#aebfe3" stroke-width="1.4" stroke-dasharray="1.2 .5 2.4 .5 3.6 .5 1.7 .5" opacity=".82"/><path d="M818 405.00H835.00" stroke="#aebfe3" stroke-width="1.4" stroke-dasharray="2.6 .5 1.5 .5 3.4 .5 1.1 .5 2.2 .5" opacity=".82"/><path d="M818 407.70H826.00" stroke="#aebfe3" stroke-width="1.4" stroke-dasharray="1.8 .5 3 .5 1.2 .5 2.6 .5 .9 .5" opacity=".82"/><path d="M818 412.10H842.00" stroke="#aebfe3" stroke-width="1.4" stroke-dasharray="2.6 .5 1.5 .5 3.4 .5 1.1 .5 2.2 .5" opacity=".82"/><path d="M818 415.10H842.60" stroke="#aebfe3" stroke-width="1.4" stroke-dasharray="1.8 .5 3 .5 1.2 .5 2.6 .5 .9 .5" opacity=".82"/><path d="M818 418.10H840.00" stroke="#aebfe3" stroke-width="1.4" stroke-dasharray="3.2 .5 1.3 .5 2 .5 2.8 .5 1.5 .5" opacity=".82"/><path d="M818 421.00H838.00" stroke="#aebfe3" stroke-width="1.4" stroke-dasharray="1.2 .5 2.4 .5 3.6 .5 1.7 .5" opacity=".82"/><path d="M818 423.80H835.00" stroke="#aebfe3" stroke-width="1.4" stroke-dasharray="2.6 .5 1.5 .5 3.4 .5 1.1 .5 2.2 .5" opacity=".82"/><path d="M818 427.90H841.00" stroke="#aebfe3" stroke-width="1.4" stroke-dasharray="2.6 .5 1.5 .5 3.4 .5 1.1 .5 2.2 .5" opacity=".82"/><path d="M818 430.80H842.60" stroke="#aebfe3" stroke-width="1.4" stroke-dasharray="1.8 .5 3 .5 1.2 .5 2.6 .5 .9 .5" opacity=".82"/><path d="M818 433.60H836.00" stroke="#aebfe3" stroke-width="1.4" stroke-dasharray="3.2 .5 1.3 .5 2 .5 2.8 .5 1.5 .5" opacity=".82"/><defs><linearGradient id="fq" x1="0" y1="0" x2="1" y2="0"><stop offset="0" stop-color="#3c6cc4"/><stop offset="1" stop-color="#7ea6e0"/></linearGradient></defs><path d="M911.1 422.8L945 423C930 424.6 919 428.4 911.1 434.9Z" fill="url(#fq)"/><path d="M922.1 432.30H961.10" stroke="#8a4a1c" stroke-width="1.6" stroke-dasharray="2.6 .5 1.5 .5 3.4 .5 1.1 .5 2.2 .5" opacity=".82"/><path d="M923.9 435.80H961.10" stroke="#8a4a1c" stroke-width="1.6" stroke-dasharray="2.6 .5 1.5 .5 3.4 .5 1.1 .5 2.2 .5" opacity=".82"/><path d="M920.4 439.50H961.10" stroke="#8a4a1c" stroke-width="1.6" stroke-dasharray="2.6 .5 1.5 .5 3.4 .5 1.1 .5 2.2 .5" opacity=".82"/><path d="M921 443.00H961.10" stroke="#8a4a1c" stroke-width="1.6" stroke-dasharray="2.6 .5 1.5 .5 3.4 .5 1.1 .5 2.2 .5" opacity=".82"/><path d="M941.3 446.60H961.10" stroke="#8a4a1c" stroke-width="1.6" stroke-dasharray="2.6 .5 1.5 .5 3.4 .5 1.1 .5 2.2 .5" opacity=".82"/><path d="M941.9 451.60H961.40" stroke="#3a4a6a" stroke-width="1.3" stroke-dasharray="2.6 .5 1.5 .5 3.4 .5 1.1 .5 2.2 .5" opacity=".82"/><rect x="604" y="543.8" width="10" height="2" fill="#9dc3e6"/></svg><div class="b" style="left:592px;top:546px;width:431px;height:1px;background:#e1e1e1"></div><div class="b" style="left:592px;top:575px;width:432px;height:30px;background:#d2d0ce;border:3px solid #fa4e42"></div><span class="t" style="left:607px;top:155px;font-size:11.6px;color:#222;letter-spacing:0.15px;font-weight:700">Built-in</span><span class="t" style="left:619.1px;top:339px;font-size:12.5px;color:#606060;letter-spacing:-0.18px">Simple Text Box</span><span class="t" style="left:764.2px;top:339px;font-size:12.5px;color:#606060;letter-spacing:-0.26px">Austin Quote</span><span class="t" style="left:897.9px;top:339px;font-size:12.5px;color:#606060;letter-spacing:-0.32px">Austin Sidebar</span><span class="t" style="left:622.7px;top:520px;font-size:12.5px;color:#606060;letter-spacing:-0.31px">Banded Quote</span><span class="t" style="left:755px;top:520px;font-size:12.5px;color:#606060;letter-spacing:-0.28px">Banded Sidebar</span><span class="t" style="left:903.5px;top:520px;font-size:12.5px;color:#606060;letter-spacing:-0.37px">Facet Quote</span><span class="t" style="left:629.5px;top:556px;font-size:12px;color:#3b3b3b;letter-spacing:0.18px"><u>M</u>ore Text Boxes from Office.com</span><span class="t" style="left:629.5px;top:585px;font-size:12px;color:#3b3b3b;letter-spacing:-0.01px"><u>D</u>raw Text Box</span><span class="t" style="left:629.5px;top:614px;font-size:12px;color:#a6a6a6;letter-spacing:-0.09px"><u>S</u>ave Selection to Text Box Gallery</span><svg class="i" style="left:603px;top:551.5px" width="19" height="18" viewBox="603 551.5 19 18"><path d="M608.6 567A7.4 7.4 0 1 1 619.2 560.6" fill="none" stroke="#444" stroke-width="1.2"/><path d="M604.6 558H619M604.4 562.2H615" stroke="#444" stroke-width="1.1"/><path d="M611.8 552.8C609.2 554.6 608 557.4 608 560.2C608 562.4 608.4 564 609.2 565.4M611.8 552.8C614 554.4 615.4 557 615.6 560" fill="none" stroke="#444" stroke-width="1.1"/><path d="M610.4 564.8H619.4M616.8 562.2L619.6 564.8L616.8 567.4" fill="none" stroke="#2b88d8" stroke-width="1.3"/></svg><svg class="i" style="left:1007px;top:554.5px" width="8" height="12" viewBox="1007 554.5 8 12"><path d="M1008.6 556L1013.4 560.4L1008.6 564.8" fill="none" stroke="#444" stroke-width="1.2"/></svg><svg class="i" style="left:604px;top:582px" width="16.5" height="15" viewBox="604 582 16.5 15"><rect x="606" y="584" width="12.2" height="10.8" fill="#fafcff" stroke="#444" stroke-width="1.2"/><g fill="#3b6fc4"><rect x="604.7" y="582.7" width="2.5" height="2.5"/><rect x="617" y="582.7" width="2.5" height="2.5"/><rect x="604.7" y="593.5" width="2.5" height="2.5"/><rect x="617" y="593.5" width="2.5" height="2.5"/></g><text x="612.1" y="592.7" text-anchor="middle" style="font-family:Liberation Sans,sans-serif;font-weight:700;font-size:9.4px" fill="#2a5cc0">A</text></svg><svg class="i" style="left:603.5px;top:610.5px" width="16.5" height="16" viewBox="603.5 610.5 16.5 16"><path d="M605.1 611.7H617.2L618.2 612.7V625H607.5L605.1 622.6Z" fill="none" stroke="#b4b4b4" stroke-width="1.3" stroke-linejoin="round"/><path d="M607.8 611.7V617.6H615.6V611.7M608.8 625V620.4H614.8V625" fill="none" stroke="#b4b4b4" stroke-width="1.3"/></svg></div></div>
<div id="tip"><div style="position:absolute;left:-702.2px;top:-436px"><span class="t" style="left:712.7px;top:444px;font-size:12px;color:#444;letter-spacing:0.01px;font-weight:700">Draw a Text Box</span><span class="t" style="left:712.7px;top:466px;font-size:12px;color:#5e5e5e;letter-spacing:-0.04px">Draw a text box anywhere.</span><span class="t" style="left:712.7px;top:499px;font-size:12px;color:#5e5e5e;letter-spacing:-0.01px">This is a great way to get the exact</span><span class="t" style="left:712.7px;top:515px;font-size:12px;color:#5e5e5e;letter-spacing:0px">text box size you want, especially</span><span class="t" style="left:712.7px;top:531px;font-size:12px;color:#5e5e5e;letter-spacing:0.01px">when adding text to shapes and</span><span class="t" style="left:712.7px;top:547px;font-size:12px;color:#5e5e5e;letter-spacing:-0.27px">objects.</span></div></div>
</div>
</body></html>
